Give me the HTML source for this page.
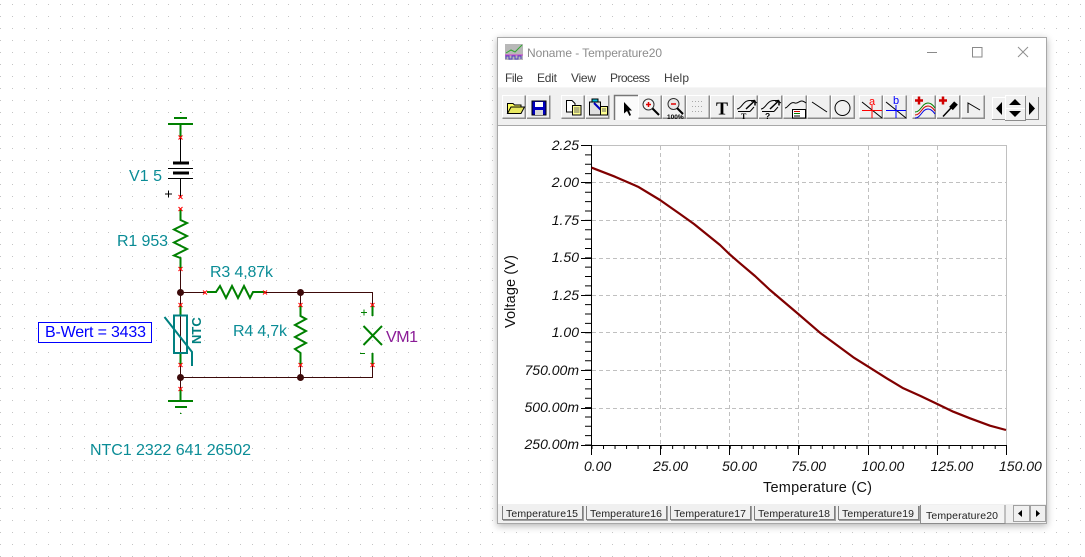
<!DOCTYPE html>
<html><head><meta charset="utf-8"><title>Noname - Temperature20</title>
<style>
html,body{margin:0;padding:0;background:#fff;width:1085px;height:557px;overflow:hidden}
#win{position:absolute;left:497px;top:37px;width:550px;height:487px;box-shadow:0 2px 7px rgba(0,0,0,.3)}
svg{position:absolute;left:0;top:0;font-family:"Liberation Sans",sans-serif}
</style></head><body>
<div id="win"></div>
<svg width="1085" height="557" viewBox="0 0 1085 557" xmlns="http://www.w3.org/2000/svg">
<defs>
<pattern id="dots" x="0" y="4" width="12" height="12" patternUnits="userSpaceOnUse"><rect width="1" height="1" fill="#c4c4c4"/></pattern>
<g id="b"><rect width="24" height="24" fill="#f0f0f0"/><path d="M.5 23V.5H23.500" stroke="#fff" fill="none"/><path d="M.5 23.250H23.250V.5" stroke="#8c8c8c" stroke-width="1.500" fill="none"/></g>
</defs>
<rect x="0" y="0" width="497" height="557" fill="url(#dots)"/>
<rect x="1049" y="0" width="36" height="557" fill="url(#dots)"/>
<rect x="497" y="0" width="552" height="35" fill="url(#dots)"/>
<rect x="497" y="530" width="552" height="27" fill="url(#dots)"/>

<!-- schematic wires -->
<g fill="none">
<path d="M180.500 137V163M180.500 178V197" stroke="#000" stroke-width="1"/>
<path d="M180.500 269V377M180.500 292.500H205M265 292.500H372.500V305M300.500 292V305M180.500 377.500H372.500V365M300.500 365V377M180.500 377V389" stroke="#3c0a0a" stroke-width="1"/>
<g stroke="#008000" stroke-width="2">
<path d="M168 124H193M174 118H187M180.500 124V137"/>
<path d="M180.500 209V220L187 223L174 229.500L187 236L174 242.500L187 249L174 255.500L180.500 258V269"/>
<path d="M207 292H216L220 286L226 298L232 286L238 298L244 286L250 298L253 292H265"/>
<path d="M300.500 305V316L306 319L295 325L306 331L295 337L306 343L295 349L300.500 353V365"/>
<path d="M372.500 305V316M372.500 353V365M363.500 326L382 345M382 326L363.500 345"/>
<path d="M180.500 304V315M180.500 353V365M180.500 389V401M168 401H193M175 407H187"/>
</g>
<path d="M180 112.500h1.500M180 413.500h1.500" stroke="#008000"/>
<path d="M173 163H189M173 173H189" stroke="#000" stroke-width="3"/>
<path d="M168 168.500H193M168 178.500H193" stroke="#000" stroke-width="1"/>
<rect x="174" y="315.500" width="13" height="37.500" stroke="#008080" stroke-width="2"/>
<path d="M164.500 317L192 352V366" stroke="#008080" stroke-width="2"/>
<path d="M165 194H172M168.500 190.500V197.500" stroke="#000"/>
<path d="M361 312.500H367M364 309.500V315.500" stroke="#008000"/>
<path d="M360 353.500H365" stroke="#008000"/>
<path stroke="#f00" stroke-width="1" d="M178.500 135.500l4 4m0-4l-4 4M178.500 195l4 4m0-4l-4 4M178.500 207l4 4m0-4l-4 4M178.500 267l4 4m0-4l-4 4M203 290.500l4 4m0-4l-4 4M263 290.500l4 4m0-4l-4 4M178.500 303l4 4m0-4l-4 4M178.500 363l4 4m0-4l-4 4M178.500 387l4 4m0-4l-4 4M298.500 303l4 4m0-4l-4 4M298.500 363l4 4m0-4l-4 4M370.500 303l4 4m0-4l-4 4M370.500 363l4 4m0-4l-4 4"/>
</g>
<g fill="#3c0a0a"><circle cx="180.500" cy="292.500" r="3.500"/><circle cx="180.500" cy="377.500" r="3.500"/><circle cx="300.500" cy="292.500" r="3.500"/><circle cx="300.500" cy="377.500" r="3.500"/></g>
<g font-size="16" fill="#0a8c96">
<text x="129" y="181" textLength="33">V1 5</text>
<text x="117" y="246" textLength="51">R1 953</text>
<text x="210" y="277" textLength="63">R3 4,87k</text>
<text x="233" y="336" textLength="54">R4 4,7k</text>
<text x="90" y="455" textLength="161">NTC1 2322 641 26502</text>
</g>
<text x="386" y="342" font-size="16" fill="#8a1a96" textLength="32">VM1</text>
<rect x="38.500" y="322.500" width="113" height="20" fill="#fff" stroke="#0000ff"/>
<text x="45" y="337" font-size="16" fill="#0000ff" textLength="101">B-Wert = 3433</text>
<text transform="translate(201,344) rotate(-90)" font-size="13" font-weight="bold" fill="#008080">NTC</text>

<!-- window -->
<rect x="497.500" y="37.500" width="549" height="486" fill="#fff" stroke="#a8a8a8"/>
<rect x="505" y="44" width="18" height="16" fill="#b8b8b8"/>
<path d="M506 53L511 50L515 52L522 45" stroke="#2fa82f" fill="none"/>
<path d="M505 55h18" stroke="#d040d0"/>
<path d="M506 59v-3h3v3h3v-3h3v3h3v-3h3v3" stroke="#5040c0" fill="none"/>
<text x="527" y="57" font-size="12" fill="#8c8c8c" textLength="135">Noname - Temperature20</text>
<path d="M927 52.500H937" stroke="#8a8a8a"/>
<rect x="972.500" y="47.500" width="9.500" height="9.500" fill="none" stroke="#8a8a8a"/>
<path d="M1018 47L1028 57M1028 47L1018 57" stroke="#909090" fill="none"/>
<g font-size="12" fill="#3c3c3c">
<text x="505" y="82" textLength="18">File</text><text x="537" y="82" textLength="20">Edit</text><text x="571" y="82" textLength="25">View</text><text x="610" y="82" textLength="40">Process</text><text x="664" y="82" textLength="25">Help</text>
</g>
<rect x="498" y="88" width="548" height="37" fill="#f0f0f0"/>
<path d="M498 87.500H1046" stroke="#f6f6f6"/>
<path d="M498 125.500H1046" stroke="#a8a8a8"/>

<!-- toolbar buttons -->
<use href="#b" x="502" y="95"/><use href="#b" x="526.500" y="95"/>
<use href="#b" x="561" y="95"/><use href="#b" x="585.500" y="95"/>
<rect x="614" y="95" width="24" height="25" fill="#fbfbfb"/><path d="M614.500 120V95.500H638" stroke="#777" stroke-width="1.500" fill="none"/>
<use href="#b" x="638" y="95"/><use href="#b" x="662" y="95"/><use href="#b" x="686" y="95"/><use href="#b" x="710" y="95"/><use href="#b" x="734" y="95"/><use href="#b" x="758.500" y="95"/><use href="#b" x="783" y="95"/><use href="#b" x="807" y="95"/><use href="#b" x="831" y="95"/>
<use href="#b" x="859" y="95"/><use href="#b" x="883" y="95"/>
<use href="#b" x="912" y="95"/><use href="#b" x="936.500" y="95"/><use href="#b" x="961" y="95"/>
<rect x="1005" y="96" width="20" height="24" fill="#f0f0f0"/><path d="M1005.500 120V95.500H1025" stroke="#fff" fill="none"/><path d="M1005 120.500H1025.500V96" stroke="#8c8c8c" fill="none"/><path d="M1005 108.500H1025" stroke="#fff"/>
<rect x="1026" y="97" width="13" height="23" fill="#f0f0f0"/><path d="M1026 119.500H1038.500V97" stroke="#8c8c8c" fill="none"/>
<rect x="992" y="97" width="13" height="23" fill="#f0f0f0"/><path d="M992.500 120V97.500H1005" stroke="#fff" fill="none"/><path d="M992 119.500H1005" stroke="#8c8c8c"/>

<!-- icons -->
<path d="M507.500 113V103.500H513L514.500 105H521V107" fill="#ffff60" stroke="#000"/>
<path d="M507.500 113.500L511 107H524.500L521 113.500Z" fill="#e8e860" stroke="#000"/>
<rect x="532" y="101" width="14" height="14" fill="#0000c0" stroke="#000"/>
<rect x="535" y="102" width="8" height="5" fill="#fff"/><rect x="535" y="110" width="8" height="5" fill="#d8d8d8"/>
<path d="M566.500 100.500H572L575 103.500V112H566.500Z" fill="#fff" stroke="#000"/>
<rect x="572.500" y="105.500" width="8.500" height="9.500" fill="#ffff90" stroke="#000"/>
<path d="M574 108h5.500M574 110h5.500M574 112h5.500" stroke="#666"/>
<rect x="589.500" y="102" width="11" height="13" fill="#e0e0e0" stroke="#000"/>
<rect x="592" y="99" width="6" height="3" fill="#00c0e0" stroke="#000"/>
<path d="M594 103L601 110" stroke="#0000c0" stroke-width="2"/>
<rect x="600.500" y="106.500" width="7" height="8.500" fill="#ffff90" stroke="#000"/>
<path d="M602 109h4M602 111h4" stroke="#666"/>
<path d="M624 102V113.500L627 111L629.500 116L631 115L629 110.500H632Z" fill="#000"/>
<circle cx="648.500" cy="104.500" r="5.500" fill="#f4f4f4" stroke="#333"/>
<path d="M646 104.500h5M648.500 102v5" stroke="#e00000" stroke-width="1.500"/>
<path d="M652.500 108.500L659 115" stroke="#000" stroke-width="2"/>
<circle cx="673.500" cy="104" r="5.500" fill="#e8e8e8" stroke="#333"/>
<path d="M671 104h5" stroke="#e00000" stroke-width="1.500"/>
<path d="M677 108L683 114" stroke="#000" stroke-width="2"/>
<text x="667" y="119" font-size="6.500" font-weight="bold" fill="#000">100%</text>
<path d="M692 101.500h1M695 101.500h1M698 101.500h1M701 101.500h1M692 106.500h1M695 106.500h1M698 106.500h1M701 106.500h1M692 111.500h1M695 111.500h1M698 111.500h1M701 111.500h1" stroke="#a8a8a8"/>
<text x="716" y="114.500" font-size="18" font-weight="bold" font-family="Liberation Serif" fill="#000">T</text>
<path d="M737 109C741 109 743 102 747 101C750 100 753 100 757 103" stroke="#000" fill="none"/>
<path d="M746 109L755 100.500M755 100.500l-4 .5M755 100.500v5" stroke="#000" stroke-width="1.500" fill="none"/>
<path d="M738 111.500H750M750 111.500L754 107" stroke="#000" fill="none"/><text x="741" y="119" font-size="8" font-weight="bold" font-family="Liberation Serif" fill="#000">T</text>
<path d="M761 109C765 109 767 102 771 101C774 100 777 100 781 103" stroke="#000" fill="none"/>
<path d="M770 109L779 100.500M779 100.500l-4 .5M779 100.500v5" stroke="#000" stroke-width="1.500" fill="none"/>
<path d="M762 111.500H774M774 111.500L778 107" stroke="#000" fill="none"/><text x="765" y="119" font-size="8.500" font-weight="bold" fill="#000">?</text>
<path d="M785 108C788 108 790 101 795 103C799 104 800 98 806 103" stroke="#000" fill="none"/>
<rect x="792.500" y="109.500" width="13" height="8.500" fill="#fff" stroke="#000"/>
<path d="M794 111.500h6" stroke="#d00000"/><path d="M794 113.500h6" stroke="#008000"/><path d="M794 116h6" stroke="#000"/>
<path d="M812 102L827 112" stroke="#000" fill="none"/>
<circle cx="842.500" cy="108" r="7.500" fill="none" stroke="#000"/>
<path d="M862 102L882 118" stroke="#000"/><path d="M862 110.500H882M872 105V118" stroke="#f00" fill="none"/>
<text x="869" y="105" font-size="11" fill="#f00">a</text>
<path d="M886 102L906 118" stroke="#000"/><path d="M886 110.500H906M896 105V118" stroke="#00f" fill="none"/>
<text x="893" y="104" font-size="11" fill="#00f">b</text>
<path d="M915 100.500H923M919 96.500V104.500" stroke="#d00000" stroke-width="2.500"/>
<path d="M915 112C921 112 922 103 928 103C931 103 933 105 935 108" stroke="#008000" fill="none"/>
<path d="M915 115C921 115 922 106 928 106C931 106 933 108 935 111" stroke="#d00000" fill="none"/>
<path d="M915 118C921 118 922 109 928 109C931 109 933 111 935 114" stroke="#0000e0" fill="none"/>
<path d="M939 100.500H947M943 96.500V104.500" stroke="#d00000" stroke-width="2.500"/>
<path d="M943 116.500L951 108" stroke="#000" stroke-width="1.500"/>
<path d="M951 108.500L956 103" stroke="#000" stroke-width="5"/>
<path d="M968 113V103L980 110" stroke="#000" fill="none"/>
<path d="M1002 102V115L996 108.500Z" fill="#000"/>
<path d="M1015 99L1021 105H1009Z" fill="#000"/>
<path d="M1015 117L1021 111H1009Z" fill="#000"/>
<path d="M1029 102V115L1035 108.500Z" fill="#000"/>

<!-- chart -->
<g stroke="#c0c0c0" stroke-dasharray="4 3" fill="none">
<path d="M592 182.500H1006M592 220.500H1006M592 258.500H1006M592 295.500H1006M592 332.500H1006M592 370.500H1006M592 408.500H1006"/>
<path d="M660.500 146V445M729.500 146V445M798.500 146V445M868.500 146V445M937.500 146V445"/>
</g>
<path d="M591 145.500H1006.500V445" stroke="#c0c0c0" fill="none"/>
<path d="M588 145V445" stroke="#000" stroke-width="6" stroke-dasharray="1 8.360" fill="none"/>
<path d="M591.500 447H1006.500" stroke="#000" stroke-width="4" stroke-dasharray="1 10.520" fill="none"/>
<path d="M591.500 145V455M591 445.500H1006.500" stroke="#000" fill="none"/>
<path d="M581 145.500H591M581 182.500H591M581 220.500H591M581 258.500H591M581 295.500H591M581 332.500H591M581 370.500H591M581 408.500H591M581 445.500H591" stroke="#000" fill="none"/>
<path d="M660.500 445V455M729.500 445V455M798.500 445V455M868.500 445V455M937.500 445V455M1006.500 445V455" stroke="#000" fill="none"/>
<path d="M591.700 167.700L615 176.700L638 186.700L660 200L680 214L694 224L720 245L729.300 254L740 263.300L755 276L770 290L798.300 314L820 332.700L836.700 345L853.300 357.300L868.300 366.700L886.700 378.300L903.300 388.300L920 395.700L937.300 404L953.300 411.700L970 418.300L990 425.700L1006 430" stroke="#800000" stroke-width="2.200" fill="none" stroke-linejoin="round"/>
<g font-size="14" font-style="italic" fill="#111" text-anchor="end">
<text x="579" y="150">2.25</text><text x="579" y="187">2.00</text><text x="579" y="225">1.75</text><text x="579" y="262">1.50</text><text x="579" y="300">1.25</text><text x="579" y="337">1.00</text><text x="579" y="375">750.00m</text><text x="579" y="412">500.00m</text><text x="579" y="449">250.00m</text>
</g>
<g font-size="14" font-style="italic" fill="#111">
<text x="584" y="471">0.00</text><text x="653" y="471">25.00</text><text x="722" y="471">50.00</text><text x="791" y="471">75.00</text><text x="861.500" y="471">100.00</text><text x="930.500" y="471">125.00</text><text x="999" y="471">150.00</text>
</g>
<text x="763" y="492" font-size="14.500" fill="#111" textLength="109">Temperature (C)</text>
<text transform="translate(515,328) rotate(-90)" font-size="14.500" fill="#111" textLength="73">Voltage (V)</text>

<!-- tabs -->
<rect x="498" y="504" width="548" height="19" fill="#f0f0f0"/>
<g fill="#f0f0f0" stroke="#808080">
<path d="M502.500 506V519.500H582.500V506"/><path d="M586.500 506V519.500H666.500V506"/><path d="M670.500 506V519.500H750.500V506"/><path d="M754.500 506V519.500H834.500V506"/><path d="M838.500 506V519.500H918.500V506"/>
</g>
<path d="M583.500 506V520.500H503M667.500 506V520.500H587M751.500 506V520.500H671M835.500 506V520.500H755M919.500 506V520.500H839" stroke="#a0a0a0" fill="none"/>
<path d="M920.500 505V523.500H1005V505" fill="#f4f4f4" stroke="#8c8c8c"/>
<g font-size="10.500" fill="#222">
<text x="506" y="517" textLength="72">Temperature15</text><text x="590" y="517" textLength="72">Temperature16</text><text x="674" y="517" textLength="72">Temperature17</text><text x="758" y="517" textLength="72">Temperature18</text><text x="842" y="517" textLength="72">Temperature19</text><text x="926" y="519" textLength="72">Temperature20</text>
</g>
<rect x="1013.500" y="505.500" width="16" height="16" fill="#f0f0f0" stroke="#a0a0a0"/>
<rect x="1030.500" y="505.500" width="15" height="16" fill="#f0f0f0" stroke="#a0a0a0"/>
<path d="M1022 510V517L1018 513.500Z" fill="#000"/>
<path d="M1036 510V517L1040 513.500Z" fill="#000"/>
</svg>
</body></html>
